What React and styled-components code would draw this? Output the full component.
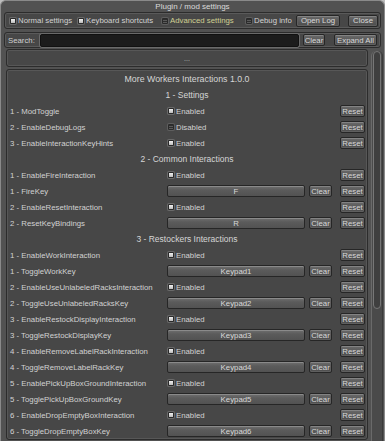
import React from "react"
import styled, { createGlobalStyle, css } from 'styled-components';

const GlobalStyle = createGlobalStyle`
  html, body {
    margin: 0;
    padding: 0;
    background: #bdbdbd;
  }
  * { box-sizing: border-box; }
`

const Window = styled.div`
  width: 385px;
  height: 441px;
  overflow: hidden;
  background: #525252;
  border: 1px solid #8a8a8a;
  border-bottom: none;
  border-radius: 6px 6px 0 0;
  display: flex;
  flex-direction: column;
  font-family: "Liberation Sans", Arial, sans-serif;
  font-size: 7.8px;
  color: #d2d2d2;
`

const Title = styled.div`
  height: 11px;
  line-height: 11px;
  text-align: center;
  font-size: 8px;
  color: #dadada;
  flex-shrink: 0;
`

const Bar = styled.div`
  height: ${p => p.$h}px;
  margin: ${p => p.$mt}px 3px 0 3px;
  background: #474747;
  border: 1px solid #2c2c2c;
  box-shadow: inset 0 0 0 1px #5a5a5a;
  border-radius: 3px;
  display: flex;
  align-items: center;
  padding-left: ${p => p.$pl}px;
  flex-shrink: 0;
`

const ToggleItem = styled.div`
  width: ${p => p.$w}px;
  display: flex;
  align-items: center;
  gap: 2px;
  white-space: nowrap;
  color: ${p => p.$accent ? '#cfcf92' : '#d2d2d2'};
`

const Check = styled.span`
  display: inline-block;
  width: 6px;
  height: 6px;
  border-radius: 1px;
  flex-shrink: 0;
  ${p => p.$on ? css`
    background: linear-gradient(#f2f2f2, #bcbcbc);
    border: 1px solid #2a2a2a;
    box-shadow: 0 0 0 1px #6a6a6a;
  ` : css`
    background: repeating-linear-gradient(#2e2e2e 0 1px, #5a5a5a 1px 2px);
    border: 1px solid #2a2a2a;
    box-shadow: 0 0 0 1px #5e5e5e;
  `}
`

const Button = styled.div`
  width: ${p => p.$w}px;
  height: ${p => p.$h || 12}px;
  margin-left: ${p => p.$ml || 0}px;
  flex-shrink: 0;
  display: flex;
  align-items: center;
  justify-content: center;
  white-space: nowrap;
  color: #d8d8d8;
  background: linear-gradient(#6a6a6a, #565656 60%, #4e4e4e);
  border: 1px solid #262626;
  box-shadow: inset 0 1px 0 #838383, inset 0 0 0 1px #5f5f5f;
  border-radius: 2px;
  ${p => p.$hidden && css`visibility: hidden;`}
`

const SearchLabel = styled.span`
  width: 32px;
  color: #cfcfcf;
`

const SearchInput = styled.div`
  width: 259px;
  height: 13px;
  background: #1c1c1c;
  border: 1px solid #111;
  box-shadow: 0 0 0 1px #6a6a6a;
  border-radius: 2px;
`

const ScrollArea = styled.div`
  flex: 1;
  min-height: 0;
  display: flex;
  margin-top: 1px;
  padding-left: 5px;
  overflow: hidden;
`

const Content = styled.div`
  width: 362px;
  display: flex;
  flex-direction: column;
  gap: 2px;
`

const Panel = styled.div`
  background: #474747;
  border: 1px solid #2c2c2c;
  box-shadow: inset 0 0 0 1px #575757;
  border-radius: 3px;
  padding: ${p => p.$pad || '1px 2px 0 2px'};
  ${p => p.$small && css`
    height: 18px;
    display: flex;
    align-items: center;
    justify-content: center;
    color: #bdbdbd;
    font-size: 7px;
  `}
`

const HeadRow = styled.div`
  height: 16px;
  line-height: 16px;
  text-align: center;
  font-size: ${p => p.$big ? 8.8 : 8.5}px;
  color: #d6d6d6;
`

const Row = styled.div`
  height: 16px;
  display: flex;
  align-items: center;
`

const Label = styled.div`
  width: 158px;
  white-space: nowrap;
  overflow: hidden;
  padding-left: 1px;
`

const Value = styled.div`
  width: 138px;
  display: flex;
  align-items: center;
  gap: 2px;
  padding-left: 1px;
`

const KeyField = styled.div`
  width: 138px;
  height: 12px;
  display: flex;
  align-items: center;
  justify-content: center;
  color: #d8d8d8;
  background: linear-gradient(#707070, #5b5b5b 40%, #525252);
  border: 1px solid #262626;
  box-shadow: inset 0 1px 0 #8a8a8a;
  border-radius: 2px;
`

const ScrollBar = styled.div`
  width: 12px;
  margin-left: 3px;
  margin-top: 2px;
  position: relative;
  background: #4a4a4a;
  border-left: 1px solid #6a6a6a;
  border-right: 1px solid #3a3a3a;
  border-radius: 5px 5px 0 0;
`

const Thumb = styled.div`
  position: absolute;
  left: 1px;
  right: 1px;
  top: 0;
  height: 258px;
  background: #3f3f3f;
  border: 1px solid #777;
  border-radius: 5px;
`

const Toggle = ({ on, label, accent, w }) => (
  <ToggleItem $w={w} $accent={accent}>
    <Check $on={on} />
    <span>{label}</span>
  </ToggleItem>
)

const sections = [
  {
    title: '1 - Settings',
    rows: [
      { name: '1 - ModToggle', on: true },
      { name: '2 - EnableDebugLogs', on: false },
      { name: '3 - EnableInteractionKeyHints', on: true },
    ],
  },
  {
    title: '2 - Common Interactions',
    rows: [
      { name: '1 - EnableFireInteraction', on: true },
      { name: '1 - FireKey', key: 'F' },
      { name: '2 - EnableResetInteraction', on: true },
      { name: '2 - ResetKeyBindings', key: 'R' },
    ],
  },
  {
    title: '3 - Restockers Interactions',
    rows: [
      { name: '1 - EnableWorkInteraction', on: true },
      { name: '1 - ToggleWorkKey', key: 'Keypad1' },
      { name: '2 - EnableUseUnlabeledRacksInteraction', on: true },
      { name: '2 - ToggleUseUnlabeledRacksKey', key: 'Keypad2' },
      { name: '3 - EnableRestockDisplayInteraction', on: true },
      { name: '3 - ToggleRestockDisplayKey', key: 'Keypad3' },
      { name: '4 - EnableRemoveLabelRackInteraction', on: true },
      { name: '4 - ToggleRemoveLabelRackKey', key: 'Keypad4' },
      { name: '5 - EnablePickUpBoxGroundInteraction', on: true },
      { name: '5 - TogglePickUpBoxGroundKey', key: 'Keypad5' },
      { name: '6 - EnableDropEmptyBoxInteraction', on: true },
      { name: '6 - ToggleDropEmptyBoxKey', key: 'Keypad6' },
    ],
  },
]

const SettingRow = ({ row }) => (
  <Row>
    <Label>{row.name}</Label>
    {row.key ? (
      <KeyField>{row.key}</KeyField>
    ) : (
      <Value>
        <Check $on={row.on} />
        <span>{row.on ? 'Enabled' : 'Disabled'}</span>
      </Value>
    )}
    <Button $w={23} $ml={4} $hidden={!row.key}>Clear</Button>
    <Button $w={25} $ml={8}>Reset</Button>
  </Row>
)

export default function App() {
  return (
    <>
      <GlobalStyle />
      <Window>
        <Title>Plugin / mod settings</Title>
        <Bar $h={17} $mt={0} $pl={5}>
          <Toggle on label="Normal settings" w={68} />
          <Toggle on label="Keyboard shortcuts" w={84} />
          <Toggle accent label="Advanced settings" w={84} />
          <Toggle label="Debug info" w={50} />
          <Button $w={44}>Open Log</Button>
          <Button $w={30} $ml={8}>Close</Button>
        </Bar>
        <Bar $h={16} $mt={3} $pl={3}>
          <SearchLabel>Search:</SearchLabel>
          <SearchInput />
          <Button $w={22} $ml={4}>Clear</Button>
          <Button $w={43} $ml={9}>Expand All</Button>
        </Bar>
        <ScrollArea>
          <Content>
            <Panel $small>...</Panel>
            <Panel>
              <HeadRow $big>More Workers Interactions 1.0.0</HeadRow>
              {sections.map(section => (
                <React.Fragment key={section.title}>
                  <HeadRow>{section.title}</HeadRow>
                  {section.rows.map(row => (
                    <SettingRow key={row.name} row={row} />
                  ))}
                </React.Fragment>
              ))}
            </Panel>
          </Content>
          <ScrollBar>
            <Thumb />
          </ScrollBar>
        </ScrollArea>
      </Window>
    </>
  )
}
